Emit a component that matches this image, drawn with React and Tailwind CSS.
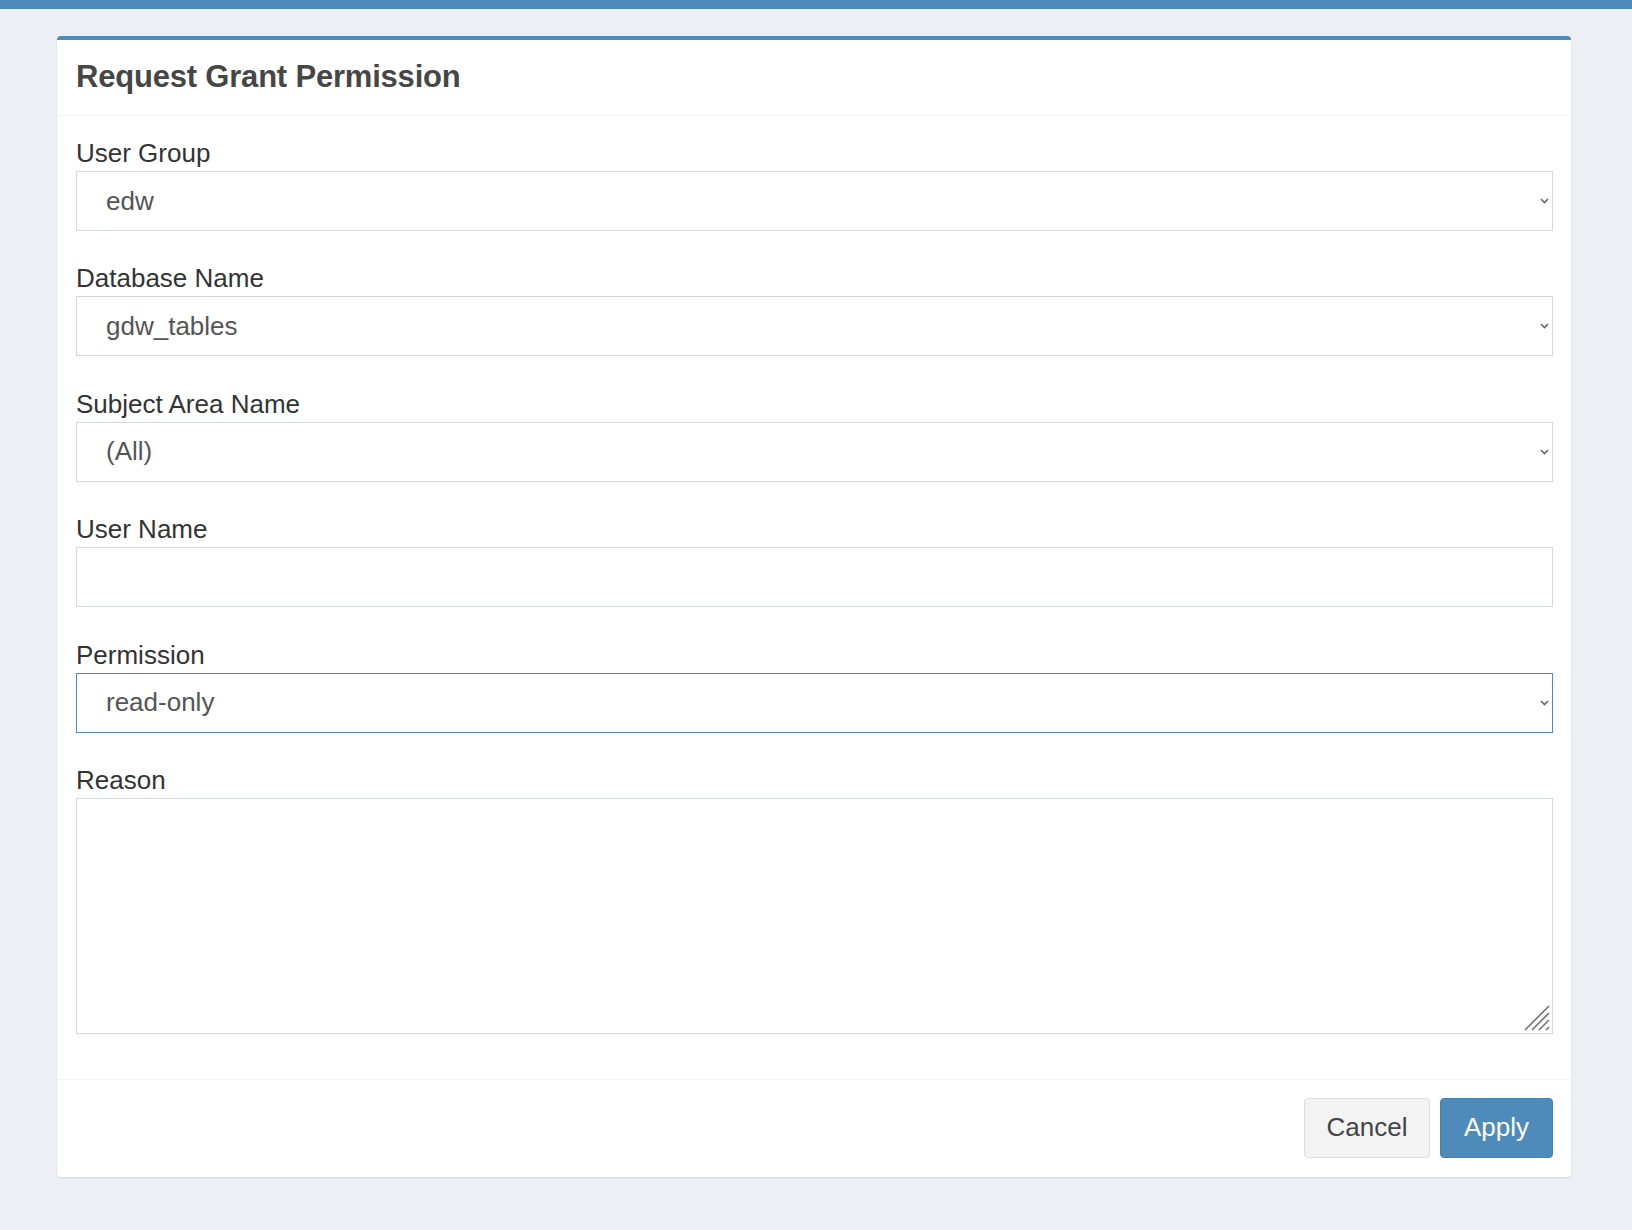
import { useState } from 'react';

const fieldBox =
  'block w-full h-[60px] border bg-white pl-[29px] pr-12 text-[26px] text-[#555] outline-none appearance-none';

function Chevron() {
  return (
    <svg
      width="9"
      height="6"
      viewBox="0 0 9 6"
      className="pointer-events-none absolute right-[4px] top-1/2 -translate-y-1/2"
    >
      <path d="M1 1l3.5 3.5L8 1" fill="none" stroke="#666" strokeWidth="1.6" />
    </svg>
  );
}

function SelectField({ label, value, options, onChange, focused }) {
  return (
    <div className="mb-[29.4px]">
      <label className="block h-[36px] leading-[36px] text-[26px] text-[#333]">{label}</label>
      <div className="relative">
        <select
          value={value}
          onChange={(e) => onChange(e.target.value)}
          className={`${fieldBox} ${focused ? 'border-[#4f8bba]' : 'border-[#d2d6de]'}`}
        >
          {options.map((o) => (
            <option key={o} value={o}>{o}</option>
          ))}
        </select>
        <Chevron />
      </div>
    </div>
  );
}

export default function App() {
  const [group, setGroup] = useState('edw');
  const [db, setDb] = useState('gdw_tables');
  const [area, setArea] = useState('(All)');
  const [user, setUser] = useState('');
  const [perm, setPerm] = useState('read-only');
  const [reason, setReason] = useState('');

  return (
    <div className="min-h-[1230px] bg-[#ecf0f5] font-['Liberation_Sans',Arial,sans-serif]">
      <div className="h-[9px] bg-[#4f8bba]" />

      <div className="ml-[57px] mr-[61px] mt-[27px] rounded-[4px] border-t-4 border-[#4f8bba] bg-white shadow-[0_1px_2px_rgba(0,0,0,0.12)]">
        {/* header */}
        <div className="flex h-[76px] items-center border-b border-[#f4f4f4] px-[19px]">
          <h3 className="text-[31px] font-bold text-[#464646] tracking-[-0.2px]">Request Grant Permission</h3>
        </div>

        {/* body */}
        <div className="px-[19px] pr-[18px] pt-[19px] pb-[16px]">
          <SelectField label="User Group" value={group} onChange={setGroup} options={['edw', 'bi', 'finance']} />
          <SelectField label="Database Name" value={db} onChange={setDb} options={['gdw_tables', 'gdw_views']} />
          <SelectField label="Subject Area Name" value={area} onChange={setArea} options={['(All)', 'Sales', 'Finance']} />

          <div className="mb-[29.4px]">
            <label className="block h-[36px] leading-[36px] text-[26px] text-[#333]">User Name</label>
            <input
              type="text"
              value={user}
              onChange={(e) => setUser(e.target.value)}
              className={`${fieldBox} border-[#d2d6de]`}
            />
          </div>

          <SelectField
            label="Permission"
            value={perm}
            onChange={setPerm}
            options={['read-only', 'read-write']}
            focused
          />

          <div className="mb-[29px]">
            <label className="block h-[36px] leading-[36px] text-[26px] text-[#333]">Reason</label>
            <div className="relative">
              <textarea
                value={reason}
                onChange={(e) => setReason(e.target.value)}
                className="block h-[236px] w-full resize-none border border-[#d2d6de] bg-white px-[29px] py-3 text-[26px] text-[#555] outline-none"
              />
              <svg width="26" height="26" viewBox="0 0 26 26" className="pointer-events-none absolute bottom-[3px] right-[3px]">
                <path d="M1 25L25 1M8 25L25 8M15 25L25 15M22 25L25 22" stroke="#777" strokeWidth="1.7" />
              </svg>
            </div>
          </div>
        </div>

        {/* footer */}
        <div className="flex justify-end gap-[10px] border-t border-[#f4f4f4] px-[18px] pt-[18px] pb-[19px]">
          <button className="h-[60px] w-[126px] rounded-[4px] border border-[#ddd] bg-[#f3f3f3] text-[26px] text-[#444]">
            Cancel
          </button>
          <button className="h-[60px] w-[113px] rounded-[4px] border border-[#4683b3] bg-[#4f8bba] text-[26px] text-white">
            Apply
          </button>
        </div>
      </div>
    </div>
  );
}
